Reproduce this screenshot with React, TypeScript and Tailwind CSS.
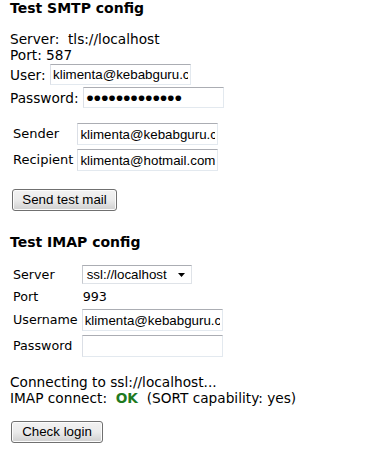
import React from 'react';

const field =
  'block w-[141px] border border-t-[#abadb3] border-l-[#dbdfe6] border-r-[#e3e9ef] border-b-[#e3e9ef] bg-white px-[2px] text-[13.33px] text-black outline-none font-["Liberation_Sans",Arial,sans-serif]';

const button =
  'rounded-[3px] border border-[#707070] bg-gradient-to-b from-[#f2f2f2] via-[#ebebeb] to-[#cfcfcf] text-[13.33px] text-black font-["Liberation_Sans",Arial,sans-serif] shadow-[inset_0_0_0_1px_#fcfcfc]';

function Field({ value, tall, dots }: { value: string; tall?: boolean; dots?: boolean }) {
  return (
    <input
      className={`${field} ${tall ? 'h-[22px]' : 'h-[21px]'} ${dots ? 'tracking-[-0.7px]' : ''}`}
      type="text"
      defaultValue={value}
      readOnly
    />
  );
}

export default function App() {
  return (
    <div className='min-h-screen bg-white pl-[10px] text-[13.7px] leading-[16px] text-black font-["DejaVu_Sans",Verdana,sans-serif]'>
      {/* SMTP */}
      <h2 className="h-[16px] text-[14px] font-bold leading-[16px]">Test SMTP config</h2>

      <div className="mt-[15px]">Server:&nbsp; tls://localhost</div>
      <div>Port: 587</div>
      <div className="mt-[1px] flex h-[21px] items-center">
        <span className="w-[40px]">User:</span>
        <Field value="klimenta@kebabguru.com" />
      </div>
      <div className="mt-[2px] flex h-[21px] items-center">
        <span className="w-[73px]">Password:</span>
        <Field value="●●●●●●●●●●●●●" dots />
      </div>

      <table className="mt-[12px] border-separate border-spacing-[2px] text-[13px]">
        <tbody>
          <tr>
            <td className="w-[62px] whitespace-nowrap p-[1px]">Sender</td>
            <td className="p-[1px]"><Field value="klimenta@kebabguru.com" tall /></td>
          </tr>
          <tr>
            <td className="whitespace-nowrap p-[1px]">Recipient</td>
            <td className="p-[1px]"><Field value="klimenta@hotmail.com" tall /></td>
          </tr>
        </tbody>
      </table>

      <div className="mt-[15px] pl-[2px]">
        <button className={`${button} h-[22px] w-[105px]`}>Send test mail</button>
      </div>

      {/* IMAP */}
      <h2 className="mt-[23px] h-[16px] text-[14px] font-bold leading-[16px]">Test IMAP config</h2>

      <table className="mt-[12px] border-separate border-spacing-[2px] text-[12.7px]">
        <tbody>
          <tr>
            <td className="w-[66px] whitespace-nowrap p-[1px]">Server</td>
            <td className="p-[1px]">
              <div className='flex h-[19px] w-[110px] items-center justify-between border border-t-[#abadb3] border-l-[#c5c8ce] border-r-[#dfe3e8] border-b-[#dfe3e8] bg-white pl-[4px] pr-[6px] text-[13.33px] font-["Liberation_Sans",Arial,sans-serif]'>
                <span>ssl://localhost</span>
                <svg width="7" height="4" viewBox="0 0 7 4">
                  <path d="M0 0h7L3.5 4z" fill="#000" />
                </svg>
              </div>
            </td>
          </tr>
          <tr>
            <td className="h-[19px] p-[1px]">Port</td>
            <td className="p-[1px] pl-[2px]">993</td>
          </tr>
          <tr>
            <td className="whitespace-nowrap p-[1px]">Username</td>
            <td className="p-[1px]"><Field value="klimenta@kebabguru.com" tall /></td>
          </tr>
          <tr>
            <td className="p-[1px]">Password</td>
            <td className="p-[1px]"><Field value="" tall /></td>
          </tr>
        </tbody>
      </table>

      <div className="mt-[14px]">Connecting to ssl://localhost...</div>
      <div>
        IMAP connect:&nbsp; <span className="font-bold text-[#1f7a1f]">OK</span>&nbsp; (SORT capability: yes)
      </div>

      <div className="mt-[15px] pl-[1px]">
        <button className={`${button} h-[22px] w-[92px]`}>Check login</button>
      </div>
    </div>
  );
}
